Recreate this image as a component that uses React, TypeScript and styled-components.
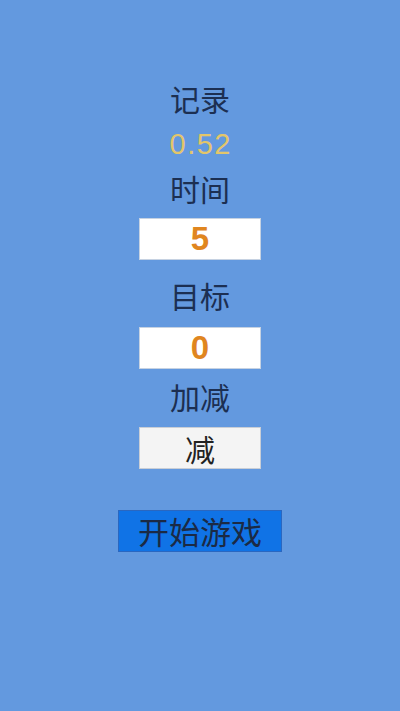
import React from 'react';
import styled, { createGlobalStyle } from 'styled-components';

const GlobalStyle = createGlobalStyle`
  html, body {
    margin: 0;
    padding: 0;
    background: #6399df;
  }
  body {
    font-family: "Liberation Sans", "Noto Sans CJK SC", sans-serif;
  }
`;

const Page = styled.div`
  width: 400px;
  height: 711px;
  background: #6399df;
  display: flex;
  flex-direction: column;
  align-items: center;
  padding-top: 82px;
  box-sizing: border-box;
`;

const Label = styled.div<{ $top?: number }>`
  margin-top: ${({ $top }) => $top || 0}px;
  height: 32px;
  line-height: 32px;
  font-size: 30px;
  color: #1c2f52;
  font-family: "Noto Sans CJK SC", sans-serif;
`;

const Record = styled.div<{ $top?: number }>`
  margin-top: ${({ $top }) => $top || 0}px;
  height: 32px;
  line-height: 32px;
  font-size: 29px;
  color: #e3c66a;
  font-family: "Liberation Sans", sans-serif;
  letter-spacing: 1.5px;
  padding-left: 1.5px;
`;

const ValueBox = styled.div<{ $top?: number }>`
  margin-top: ${({ $top }) => $top || 0}px;
  width: 122px;
  height: 42px;
  box-sizing: border-box;
  background: #ffffff;
  border: 1px solid #c6d2e2;
  display: flex;
  align-items: center;
  justify-content: center;
  font-family: "Liberation Sans", sans-serif;
  font-weight: bold;
  font-size: 33px;
  color: #e0861f;
`;

const ToggleBox = styled(ValueBox)`
  background: #f4f4f4;
  border-color: #c9ced6;
  font-family: "Noto Sans CJK SC", sans-serif;
  font-weight: normal;
  font-size: 30px;
  color: #222;
`;

const StartButton = styled.button<{ $top?: number }>`
  margin-top: ${({ $top }) => $top || 0}px;
  width: 164px;
  height: 42px;
  box-sizing: border-box;
  background: #1073e6;
  border: 1px solid #2a67c0;
  padding: 0;
  font-family: "Noto Sans CJK SC", sans-serif;
  font-size: 31px;
  line-height: 38px;
  color: #1b2a45;
  cursor: pointer;
`;

export default function App() {
  return (
    <>
      <GlobalStyle />
      <Page>
        <Label>记录</Label>
        <Record $top={14}>0.52</Record>
        <Label $top={12}>时间</Label>
        <ValueBox $top={14}>5</ValueBox>
        <Label $top={19}>目标</Label>
        <ValueBox $top={16}>0</ValueBox>
        <Label $top={11}>加减</Label>
        <ToggleBox $top={15}>减</ToggleBox>
        <StartButton $top={41}>开始游戏</StartButton>
      </Page>
    </>
  );
}
